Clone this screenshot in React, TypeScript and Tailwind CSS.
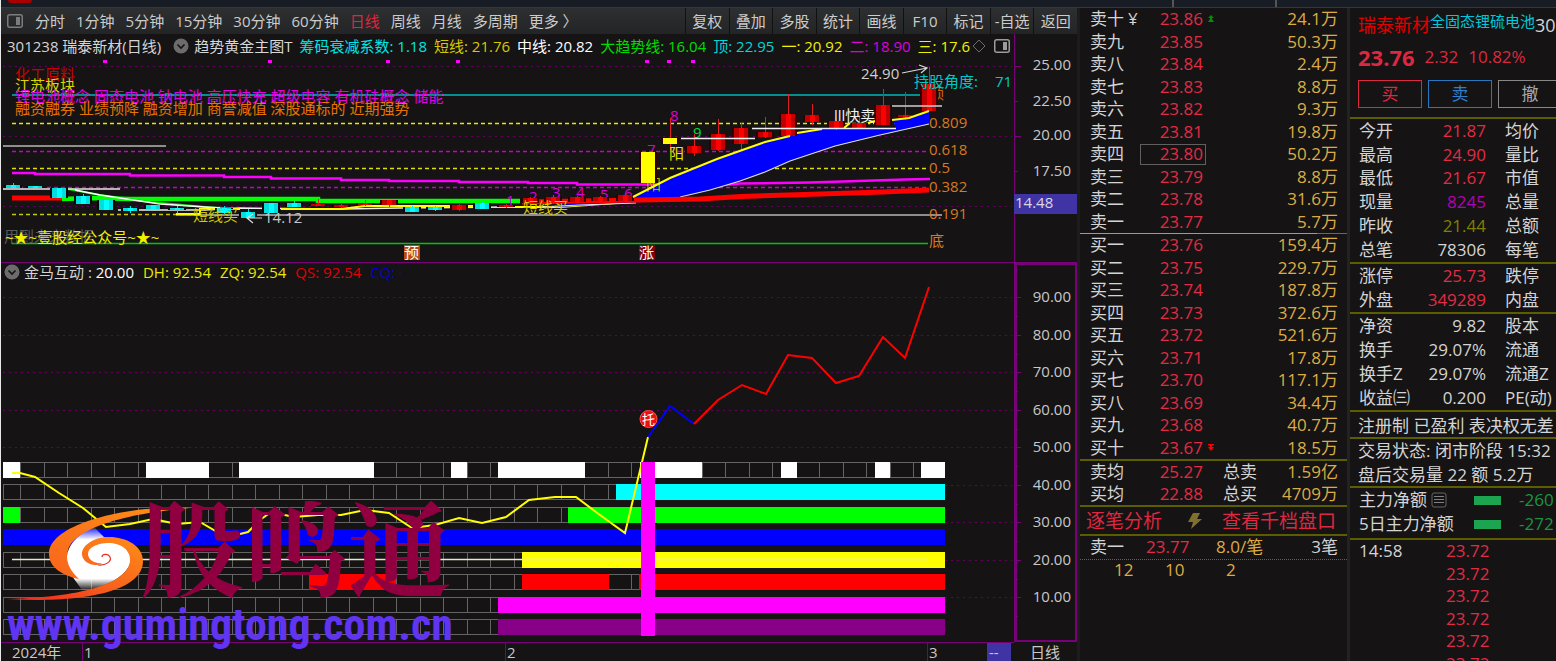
import React from "react";

const periodTabs = ["分时", "1分钟", "5分钟", "15分钟", "30分钟", "60分钟", "日线", "周线", "月线", "多周期", "更多 〉"];
const tools = ["复权", "叠加", "多股", "统计", "画线", "F10", "标记", "-自选", "返回"];

const indicators: [string, string][] = [
  ["趋势黄金主图T", "text-[#d8d8d8]"],
  ["筹码衰减系数: 1.18", "text-[#00e5e5]"],
  ["短线: 21.76", "text-[#d8c800]"],
  ["中线: 20.82", "text-white"],
  ["大趋势线: 16.04", "text-[#00dc00]"],
  ["顶: 22.95", "text-[#00d8d8]"],
  ["一: 20.92", "text-[#f0f000]"],
  ["二: 18.90", "text-[#dc00dc]"],
  ["三: 17.6", "text-[#f0f000]"],
];

const sells: [string, string, string][] = [
  ["卖十", "23.86", "24.1万"],
  ["卖九", "23.85", "50.3万"],
  ["卖八", "23.84", "2.4万"],
  ["卖七", "23.83", "8.8万"],
  ["卖六", "23.82", "9.3万"],
  ["卖五", "23.81", "19.8万"],
  ["卖四", "23.80", "50.2万"],
  ["卖三", "23.79", "8.8万"],
  ["卖二", "23.78", "31.6万"],
  ["卖一", "23.77", "5.7万"],
];
const buys: [string, string, string][] = [
  ["买一", "23.76", "159.4万"],
  ["买二", "23.75", "229.7万"],
  ["买三", "23.74", "187.8万"],
  ["买四", "23.73", "372.6万"],
  ["买五", "23.72", "521.6万"],
  ["买六", "23.71", "17.8万"],
  ["买七", "23.70", "117.1万"],
  ["买八", "23.69", "34.4万"],
  ["买九", "23.68", "40.7万"],
  ["买十", "23.67", "18.5万"],
];

const RED = "text-[#e02c44]";
const GRAY = "text-[#d4d4d4]";

type Stat = [string, string, string, string];
const statsA: Stat[] = [
  ["今开", "21.87", RED, "均价"],
  ["最高", "24.90", RED, "量比"],
  ["最低", "21.67", RED, "市值"],
  ["现量", "8245", "text-[#b400b4]", "总量"],
  ["昨收", "21.44", "text-[#808000]", "总额"],
  ["总笔", "78306", GRAY, "每笔"],
];
const statsB: Stat[] = [
  ["涨停", "25.73", RED, "跌停"],
  ["外盘", "349289", RED, "内盘"],
];
const statsC: Stat[] = [
  ["净资", "9.82", GRAY, "股本"],
  ["换手", "29.07%", GRAY, "流通"],
  ["换手Z", "29.07%", GRAY, "流通Z"],
  ["收益㈢", "0.200", GRAY, "PE(动)"],
];

/* x centre, body top, body bottom, wick top, wick bottom, colour */
type Candle = [number, number, number, number, number, "r" | "c" | "y"];
const candles: Candle[] = [
  [13, 185, 188, 183, 188, "c"],
  [35, 186, 188, 186, 188, "c"],
  [59, 188, 198, 188, 198, "c"],
  [83, 196, 204, 194, 204, "c"],
  [106, 200, 210, 200, 210, "c"],
  [130, 208, 211, 206, 213, "c"],
  [153, 205, 209, 205, 209, "c"],
  [177, 208, 210, 206, 213, "c"],
  [224, 208, 213, 206, 214, "c"],
  [248, 212, 218, 209, 218, "c"],
  [271, 203, 213, 203, 213, "c"],
  [294, 203, 207, 201, 207, "c"],
  [318, 204, 206, 199, 206, "r"],
  [341, 205, 207, 204, 208, "r"],
  [365, 203, 205, 200, 206, "r"],
  [389, 200, 205, 200, 207, "r"],
  [412, 207, 212, 206, 212, "c"],
  [435, 207, 210, 206, 211, "c"],
  [459, 205, 210, 204, 211, "r"],
  [482, 203, 209, 202, 209, "c"],
  [506, 205, 207, 204, 208, "r"],
  [530, 198, 203, 197, 204, "r"],
  [553, 197, 202, 195, 203, "r"],
  [577, 197, 202, 196, 203, "r"],
  [600, 197, 201, 196, 202, "r"],
  [625, 195, 201, 194, 202, "r"],
  [648, 152, 183, 152, 183, "y"],
  [670, 138, 144, 118, 150, "y"],
  [694, 146, 153, 134, 156, "r"],
  [718, 134, 150, 119, 151, "r"],
  [741, 128, 144, 123, 151, "r"],
  [765, 132, 137, 117, 138, "r"],
  [788, 114, 136, 94, 136, "r"],
  [812, 115, 122, 104, 125, "r"],
  [836, 121, 129, 119, 130, "r"],
  [859, 123, 129, 115, 129, "r"],
  [883, 105, 125, 89, 125, "r"],
  [905, 115, 117, 92, 120, "r"],
  [929, 84, 111, 67, 111, "r"],
];
const bodyColor = { r: "#c00000", c: "#00dede", y: "#ffff00" };
const coreColor = { r: "#ff0000", c: "#00ffff", y: "#ffff00" };

const CandleMark = ({ c }: { c: Candle }) => {
  const [x, t, b, wt, wb, k] = c;
  return (
    <g shapeRendering="crispEdges">
      <rect x={x - 9} y={t} width={18} height={b - t} fill={k === "c" ? "#0a0808" : "#300000"} />
      <rect x={x} y={wt} width={1} height={wb - wt} fill={k === "c" ? "#00dede" : "#e02020"} />
      <rect x={x - 7} y={t} width={14} height={b - t} fill={bodyColor[k]} />
      <rect x={x - 2} y={t} width={5} height={b - t} fill={coreColor[k]} />
    </g>
  );
};

const grid = (y: number) => (
  <line key={y} x1={3} x2={1012} y1={y + 0.5} y2={y + 0.5} stroke="#640064" strokeDasharray="2 4" shapeRendering="crispEdges" />
);
const dashed = (y: number, color: string, x2 = 928) => (
  <line x1={12} x2={x2} y1={y} y2={y} stroke={color} strokeWidth={1.4} strokeDasharray="4 3" />
);
const solid = (y: number, color: string, x1 = 12, x2 = 928) => (
  <line x1={x1} x2={x2} y1={y} y2={y} stroke={color} strokeWidth={1.5} />
);

const PricePane = () => (
  <svg viewBox="1 60 1076 203" className="block h-auto w-full" role="img" aria-label="日线主图">
    {[66, 136, 206].map(grid)}
    {[105, 270, 388, 458, 647, 669, 693].map((x) => (
      <rect key={x} x={x - 2} y={60} width={4} height={3} fill="#ff00ff" />
    ))}
    <g className="text-[15px]">
      <text x="15" y="80" fill="#c80000">化工原料</text>
      <text x="15" y="91" fill="#d8d800">江苏板块</text>
    </g>
    {solid(95, "#00b8b8", 12, 920)}
    {dashed(123.5, "#e8e800")}
    {dashed(151.5, "#cc00cc")}
    {dashed(168.5, "#e0e000")}
    {dashed(187.5, "#cc00cc")}
    {dashed(214.5, "#c8c800", 200)}
    <g className="text-[15px]">
      <text x="15" y="102" fill="#e400e4">锂电池概念 固态电池 钠电池 高压快充 超级电容 有机硅概念 储能</text>
      <text x="15" y="114" fill="#e87400">融资融券 业绩预降 融资增加 商誉减值 深股通标的 近期强势</text>
    </g>
    {solid(146, "#b8b8b8", 3, 166)}
    <polyline points="12,198 62,198" stroke="#ff0000" strokeWidth="5" fill="none" />
    <polyline points="62,199 92,198 130,199 318,199 318,201 520,201" stroke="#00ff00" strokeWidth="4.500" fill="none" />
    <polyline points="68,189 100,195 150,202 205,207 240,209" stroke="#00dc00" strokeWidth="2" fill="none" />
    <polyline points="12,173 35,173 35,174 130,174 130,175.500 224,175.500 224,177 271,177 271,178.500 341,178.500 341,180 389,180 389,181 459,181 459,182 528,182 528,183 577,183 577,184.500 730,184.500 740,183.500 810,182.500 858,181 905,179.500 930,179" stroke="#ff00ff" strokeWidth="2.500" fill="none" />
    {solid(189, "#e8e8e8", 3, 120)}
    {solid(215, "#b8b8b8", 176, 942)}
    <polyline points="118,210 205,210 240,208 345,209 400,208 520,207" stroke="#f0f0f0" strokeWidth="1.500" fill="none" />
    <polyline points="75,190 100,195 160,204 220,208" stroke="#ffffff" strokeWidth="1.500" fill="none" />
    <path d="M176 214H200V209H240M281 209H341L365 206H480M500 207H560L630 202" stroke="#ffff00" strokeWidth="2" fill="none" />
    <path d="M545 206 640 199V202L560 207Z" fill="#0000ff" />
    <path d="M540 207 580 205 636 203" stroke="#e8e8e8" fill="none" />
    <path d="M631 198 670 178 717 159 765 142 800 133 822 129 896 129 893 120 909 118 929 111V124L880 135 835 146 790 161 765 172 740 181 710 190 680 197Z" fill="#0000ff" />
    <path d="M680 197 710 190 740 181 765 172 790 161 835 146 880 135 929 124" stroke="#e0e0e0" strokeWidth="1.200" fill="none" />
    <path d="M522 202 640 200 700 199 741 196.500 788 195 836 193.500 883 192 929 190" stroke="#ff0000" strokeWidth="5" fill="none" />
    <text x="646" y="190" className="text-[15px]" fill="#b8b800">阳</text>
    <g className="text-[15px]" fill="#dc00dc">
      <text x="506" y="206">1</text>
      <text x="529" y="202">2</text>
      <text x="552" y="198">3</text>
      <text x="576" y="198">4</text>
      <text x="600" y="200">5</text>
      <text x="624" y="199">6</text>
      <text x="647" y="155">7</text>
      <text x="670" y="121">8</text>
      <text x="693" y="138" fill="#00dc40">9</text>
    </g>
    <text x="929" y="99" className="text-[15px]" fill="#c86410">顶</text>
    {candles.map((c) => (
      <CandleMark key={c[0]} c={c} />
    ))}
    <path d="M633 197 670 178 717 159 765 142 790 136M797 133 822 129M844 128 850 123M868 123 875 121M892 120 909 118 929 111" stroke="#ffff00" strokeWidth="2" fill="none" />
    {solid(138.5, "#f0f0f0", 681, 755)}
    {solid(128.5, "#f0f0f0", 752, 896)}
    {solid(106, "#d0d0d0", 892, 942)}
    {solid(243.5, "#00c800")}
    <g className="text-[15px]">
      <text x="669" y="159" fill="#e8e800">阳</text>
      <text x="834" y="121" fill="#f0f0f0">lll快卖</text>
      <text x="193" y="221" fill="#d0c800">短线买</text>
      <text x="523" y="213" fill="#d8c800">短线买</text>
      <text x="4" y="242" fill="#5a5a5a">用到未来数据</text>
      <text x="5" y="243" fill="#f0f000">~★~壹股经公众号~★~</text>
      <text x="264" y="223" fill="#c8c8c8">14.12</text>
      <text x="861" y="79" fill="#d0d0d0">24.90</text>
      <text x="914" y="87" fill="#00c8c8">持股角度:</text>
      <text x="995" y="87" fill="#00c8c8">71</text>
    </g>
    <path d="M262 218H247M253 214 247 218 253 223M902 73 927 68M919 65 927 68 921 73" stroke="#d8d8d8" strokeWidth="1.200" fill="none" />
    <g className="text-[15px]" fill="#d87820">
      <text x="929" y="128">0.809</text>
      <text x="929" y="155">0.618</text>
      <text x="929" y="173">0.5</text>
      <text x="929" y="192">0.382</text>
      <text x="929" y="219">0.191</text>
      <text x="929" y="246">底</text>
    </g>
    <rect x="404" y="245" width="16" height="15" fill="#b84810" />
    <text x="404" y="258" className="text-[15px]" fill="#ffffff">预</text>
    <rect x="639" y="245" width="16" height="15" fill="#800008" />
    <text x="639" y="258" className="text-[15px]" fill="#ffffff">涨</text>
    <g stroke="#780078" shapeRendering="crispEdges">
      <path d="M1014.500 60V262M1015 66.500H1021M1015 101.500H1018M1015 136.500H1021M1015 171.500H1018" />
      <path d="M1 262.500H1077" />
    </g>
    <g className="text-[15px]" fill="#c8c8c8" textAnchor="end">
      <text x="1071" y="70">25.00</text>
      <text x="1071" y="106">22.50</text>
      <text x="1071" y="140">20.00</text>
      <text x="1071" y="176">17.50</text>
    </g>
    <rect x="1014" y="194" width="63" height="20" fill="#4034a4" />
    <text x="1015" y="208" className="text-[15px]" fill="#d8d8e8">14.48</text>
  </svg>
);

type Band = { y: number; color: string; fills: [number, number][] };
const bands: Band[] = [
  { y: 462, color: "#ffffff", fills: [[3, 20], [146, 209], [239, 374], [451, 467], [498, 585], [640, 702], [781, 797], [875, 890], [921, 945]] },
  { y: 484, color: "#00ffff", fills: [[616, 945]] },
  { y: 507, color: "#00ff00", fills: [[3, 20], [568, 945]] },
  { y: 529, color: "#0000ff", fills: [[3, 945]] },
  { y: 552, color: "#ffff00", fills: [[522, 945]] },
  { y: 574, color: "#ff0000", fills: [[309, 396], [522, 609], [639, 945]] },
  { y: 597, color: "#ff00ff", fills: [[498, 945]] },
  { y: 619, color: "#880088", fills: [[498, 945]] },
];
const cellEdges = Array.from({ length: 39 }, (_, i) => Math.round(20 + i * 23.5));

const OscPane = () => (
  <svg viewBox="1 283 1076 360" className="block h-auto w-full" role="img" aria-label="金马互动">
    {[90, 80, 70, 60, 50, 40, 30, 20, 10].map((v, i) => {
      const y = Math.round(297 + i * 37.5);
      return (
        <g key={v}>
          {grid(y)}
          <text x="1071" y={y + 5} textAnchor="end" className="text-[15px]" fill="#c8c8c8">
            {v}.00
          </text>
          <path d={`M1015 ${y}.5H1021M1015 ${y + 19}.5H1018`} stroke="#780078" shapeRendering="crispEdges" />
        </g>
      );
    })}
    {bands.map((b) => (
      <g key={b.y} shapeRendering="crispEdges">
        <rect x="3.500" y={b.y + 0.5} width="941" height="15" fill="#151314" stroke="#646464" />
        {cellEdges.map((x) => (
          <line key={x} x1={x + 0.5} x2={x + 0.5} y1={b.y} y2={b.y + 16} stroke="#646464" />
        ))}
        {b.fills.map(([a, z]) => (
          <rect key={a} x={a} y={b.y} width={z - a} height="16" fill={b.color} />
        ))}
      </g>
    ))}
    {solid(559.5, "#e8e8c8")}
    <g fill="none" strokeWidth="2">
      <polyline stroke="#ffff00" points="12,473 20,473 35,477 59,493 83,508 106,527 130,524 153,519 177,524 200,522 224,536 236,535 248,532 260,520 271,512 294,517 318,515 341,515 365,510 389,513 412,528 435,525 459,518 482,523 506,517 529,500 555,497 576,497 600,515 625,533 648,437" />
      <polyline stroke="#0000ff" points="648,437 670,406 694,424" />
      <polyline stroke="#ff0000" points="694,424 718,400 742,385 766,394 788,355 812,358 836,383 859,376 883,337 905,358 929,287" />
    </g>
    <rect x="641" y="462" width="14" height="174" fill="#ff00ff" />
    <circle cx="648.500" cy="419" r="8.500" fill="#e81010" stroke="#ff5040" />
    <text x="648.500" y="424" textAnchor="middle" className="text-[13px]" fill="#ffffff">托</text>
    <g stroke="#780078" fill="none" shapeRendering="crispEdges">
      <path d="M1014.500 283V642M1 642.500H1014" />
      <path d="M1016 283V641M1015 641H1077M1076 283V641" strokeWidth="2" />
    </g>
  </svg>
);

const Watermark = () => (
  <svg viewBox="0 500 460 160" className="pointer-events-none absolute bottom-0 left-[-1px] h-[160px] w-[460px]" aria-hidden="true">
    <defs>
      <linearGradient id="swirlTop" x1="0" y1="1" x2="1" y2="0">
        <stop offset="0" stopColor="#f8641c" />
        <stop offset="1" stopColor="#ff9018" />
      </linearGradient>
      <linearGradient id="swirlLow" x1="0" y1="1" x2="1" y2="0">
        <stop offset="0" stopColor="#f02020" />
        <stop offset="0.500" stopColor="#f8641c" />
        <stop offset="1" stopColor="#ff8c18" />
      </linearGradient>
      <linearGradient id="pearl" x1="0" y1="0" x2="0" y2="1">
        <stop offset="0" stopColor="#ffffff" stopOpacity="0.100" />
        <stop offset="0.200" stopColor="#ffffff" />
        <stop offset="0.820" stopColor="#ffffff" />
        <stop offset="1" stopColor="#ffffff" stopOpacity="0.050" />
      </linearGradient>
    </defs>
    <path d="M94 526C76 534 66 546 67 560C68 572 76 580 82 589C104 588 132 574 131 556L122 540L104 536Z" fill="url(#pearl)" />
    <path d="M190 507C140 503 49 520 49 553C49 567 64 575 79 578C69 569 65 559 68 549C76 525 132 512 190 507Z" fill="url(#swirlTop)" />
    <path d="M7 598C70 602 143 594 143 560C143 544 124 535 107 536C91 537 81 546 82 554C83 562 95 567 102 562C94 563 88 558 88 553C88 546 98 542 108 542C121 542 131 549 130 560C128 580 90 596 7 598Z" fill="url(#swirlLow)" />
    <path d="M98 564C106 565 112 560 110 556C108 552 102 553 102 556" fill="none" stroke="#e83020" strokeWidth="1.200" />
    <text x="140" y="588" className="font-['Noto_Serif_CJK_SC','Noto_Sans_CJK_SC',serif] text-[104px] font-bold" fill="#900040">股鸣通</text>
    <text x="7" y="639" className="font-['Liberation_Sans_Narrow','Roboto_Condensed','Liberation_Sans',sans-serif] text-[44px] font-bold" fill="#6034f0">
      www.gumingtong.com.cn
    </text>
  </svg>
);

const PanelIcon = ({ color }: { color: string }) => (
  <svg viewBox="0 0 16 14" className="h-[14px] w-4 shrink-0" aria-hidden="true">
    <rect x="0.750" y="0.750" width="14.500" height="12.500" rx="2" fill="none" stroke={color} strokeWidth="1.500" />
    <rect x="9" y="3" width="4" height="8" fill={color} />
  </svg>
);

const Chevron = () => (
  <svg viewBox="0 0 16 16" className="h-4 w-4 shrink-0" aria-hidden="true">
    <circle cx="8" cy="8" r="7.500" fill="#6c6c6c" />
    <path d="M4.500 6.500 8 10 11.500 6.500" fill="none" stroke="#151314" strokeWidth="1.600" />
  </svg>
);

const Book = ({ rows, label }: { rows: [string, string, string][]; label: string }) => (
  <table className="h-[225px] w-full table-fixed border-collapse text-[17px] leading-5" aria-label={label}>
    <tbody>
      {rows.map(([name, price, vol]) => (
        <tr key={name}>
          <th scope="row" className={`w-[60px] pl-[10px] text-left font-normal whitespace-nowrap ${GRAY}`}>
            {name}
            {name === "卖十" && <span className="pl-1">¥</span>}
          </th>
          <td className="w-[66px]">
            <span className={`flex h-[21px] items-center justify-end border pr-[2px] ${RED} ${name === "卖四" ? "border-[#606060]" : "border-transparent"}`}>
              {price}
            </span>
          </td>
          <td className="w-5 pl-px">
            {name === "卖十" && (
              <svg viewBox="0 0 8 8" className="block h-2 w-2" aria-hidden="true">
                <path d="M4 0 7 3H5V4L7 7H1L3 4V3H1Z" fill="#009000" />
              </svg>
            )}
            {name === "买十" && (
              <svg viewBox="0 0 8 8" className="block h-2 w-2" aria-hidden="true">
                <path d="M1 0H7V1.500H5V3H7L4 7 1 3H3V1.500H1Z" fill="#ff0000" />
              </svg>
            )}
          </td>
          <td className="pr-[9px] text-right text-[#dcac44]">{vol}</td>
        </tr>
      ))}
    </tbody>
  </table>
);

const Stats = ({ rows, height }: { rows: Stat[]; height: string }) => (
  <table className={`w-full table-fixed border-collapse border-b-2 border-[#5c5c00] text-[17px] leading-5 ${height}`}>
    <tbody>
      {rows.map(([a, v, color, b]) => (
        <tr key={a}>
          <th scope="row" className={`w-[66px] pl-[9px] text-left font-normal whitespace-nowrap ${GRAY}`}>{a}</th>
          <td className={`w-[70px] text-right ${color}`}>{v}</td>
          <th scope="row" className={`pl-[19px] text-left font-normal whitespace-nowrap ${GRAY}`}>{b}</th>
        </tr>
      ))}
    </tbody>
  </table>
);

export default function App() {
  return (
    <div className="flex h-screen min-h-[661px] flex-col overflow-hidden border-l border-[#e8e8e8] bg-[#151314] font-['Open_Sans','Noto_Sans_CJK_SC',sans-serif] text-[#d4d4d4]">
      <div className="flex h-2 shrink-0 border-b border-[#34383e] bg-[#171c25]">
        <div className="ml-[7px] h-[3px] w-6 rounded-b-sm bg-[#a80000]" />
        <div className="flex-1" />
        <div className="w-[105px] border-x-2 border-[#555555]" />
        <div className="w-[279px]" />
      </div>

      <div className="flex min-h-0 flex-1">
        <main className="relative min-w-0 flex-1">
          <nav className="flex h-[26px] items-stretch bg-linear-to-b from-[#2e2f30] to-[#232425] text-[15px] leading-5">
            <div className="flex min-w-0 flex-1 items-center gap-[11px] pl-[6px]">
              <span className="mr-px flex"><PanelIcon color="#7c7c7c" /></span>
              {periodTabs.map((t) => (
                <button key={t} type="button" className={`whitespace-nowrap ${t === "日线" ? "text-[#dc2840]" : "text-[#cccccc]"}`}>
                  {t}
                </button>
              ))}
            </div>
            <div className="grid w-[392px] grid-cols-9">
              {tools.map((t) => (
                <button key={t} type="button" className="border-l border-[#111111] whitespace-nowrap text-[#cccccc]">
                  {t}
                </button>
              ))}
            </div>
          </nav>

          <div className="flex h-[26px] text-[15px] leading-5">
            <div className="flex min-w-0 flex-1 items-center border-r border-[#780078] pb-[2px] pl-[6px]">
              <span className="mr-3 whitespace-nowrap">301238 瑞泰新材(日线)</span>
              <Chevron />
              <div className="ml-[5px] flex min-w-0 flex-1 gap-[7px] overflow-hidden">
                {indicators.map(([t, c]) => (
                  <span key={t} className={`whitespace-nowrap ${c}`}>{t}</span>
                ))}
              </div>
              <svg viewBox="0 0 14 14" className="mr-2 h-[14px] w-[14px] shrink-0" aria-hidden="true">
                <path d="M7 1 13 7 7 13 1 7Z" fill="none" stroke="#6c6c6c" />
              </svg>
              <span className="mr-1 flex"><PanelIcon color="#9c9c9c" /></span>
            </div>
            <div className="w-[62px]" />
          </div>

          <PricePane />

          <div className="flex h-5 text-[15px] leading-[18px]">
            <div className="flex flex-1 items-center gap-[9px] border-r border-[#780078] pb-[2px] pl-[3px] whitespace-nowrap">
              <Chevron />
              <span className="-ml-[5px]">金马互动 : <span className="text-white">20.00</span></span>
              <span className="text-[#e8e800]">DH: 92.54</span>
              <span className="text-[#e8e800]">ZQ: 92.54</span>
              <span className="text-[#e00000]">QS: 92.54</span>
              <span className="text-[#0000dc]">CQ: -</span>
            </div>
            <div className="w-[62px] border-2 border-b-0 border-[#780078]" />
          </div>

          <OscPane />

          <div className="flex h-[18px] text-[15px] leading-[18px] text-[#c8c8c8]">
            <span className="w-[81px] pl-[11px]">2024年</span>
            <span className="w-[423px] border-l border-[#780078] pl-px">1</span>
            <span className="w-[422px] border-l border-[#780078] pl-px">2</span>
            <span className="flex-1 border-l border-[#780078] pl-px">3</span>
            <span className="w-6 bg-[#4034a4] pl-[2px]">--</span>
            <span className="w-[66px] pl-[19px]">日线</span>
          </div>
          <Watermark />
        </main>

        <aside className="w-[270px] shrink-0 border-l-3 border-[#1c1c1c]" aria-label="买卖盘">
          <Book rows={sells} label="卖盘" />
          <div className="flex h-px">
            <div className="flex-1 bg-[#c89438]" />
            <div className="w-[30px] bg-[#2878b8]" />
          </div>
          <Book rows={buys} label="买盘" />
          <div className="h-[2px] bg-[#5c5c00]" />
          <table className="h-[44px] w-full table-fixed border-collapse text-[17px] leading-5">
            <tbody>
              {[
                ["卖均", "25.27", "总卖", "1.59亿"],
                ["买均", "22.88", "总买", "4709万"],
              ].map(([a, b, c, d]) => (
                <tr key={a}>
                  <th scope="row" className={`w-[50px] pl-[10px] text-left font-normal ${GRAY}`}>{a}</th>
                  <td className={`w-[73px] text-right ${RED}`}>{b}</td>
                  <th scope="row" className={`w-[60px] pl-5 text-left font-normal ${GRAY}`}>{c}</th>
                  <td className="pr-[9px] text-right text-[#dcac44]">{d}</td>
                </tr>
              ))}
            </tbody>
          </table>
          <div className="flex h-[31px] items-center justify-between border-t-2 border-b-2 border-[#5c5c00] pr-[11px] pl-[6px] text-[19px] leading-6 text-[#dc2840]">
            <a href="#ticks">逐笔分析</a>
            <svg viewBox="0 0 14 16" className="ml-[6px] h-4 w-[14px]" aria-hidden="true">
              <path d="M5 0H12L9 6H14L3 16 5 9H0Z" fill="#807030" />
            </svg>
            <a href="#depth">查看千档盘口</a>
          </div>
          <div className="flex h-6 items-center border-b border-dotted border-[#6c6c00] pr-[9px] pb-px pl-[10px] text-[17px] leading-5">
            <span className="w-[56px]">卖一</span>
            <span className={`w-[70px] ${RED}`}>23.77</span>
            <span className="flex-1 text-[#dcac44]">8.0/笔</span>
            <span>3笔</span>
          </div>
          <div className="flex h-5 items-center pl-[34px] text-[17px] leading-5 text-[#dcac44]">
            <span className="w-[51px]">12</span>
            <span className="w-[61px]">10</span>
            <span>2</span>
          </div>
        </aside>

        <aside className="w-[209px] shrink-0 overflow-hidden border-l-3 border-[#222222] whitespace-nowrap" aria-label="行情">
          <div className="flex h-[34px] items-center pl-2 text-[18px] leading-6">
            <span className="text-[#e00000]">瑞泰新材</span>
            <span className="mb-2 text-[15px] leading-5 text-[#00c8dc]">全固态锂硫电池</span>
            <span>30</span>
          </div>
          <div className="flex h-[30px] items-center gap-[10px] pl-2 text-[17px] leading-6 text-[#dc2840]">
            <span className="text-[22px] font-bold">23.76</span>
            <span>2.32</span>
            <span>10.82%</span>
          </div>
          <div className="flex h-[47px] gap-[6px] border-b-2 border-[#5c5c00] pt-2 pl-2 text-[17px] leading-6">
            <button type="button" className="h-7 w-16 shrink-0 border border-[#dc2840] text-[#dc2840]">买</button>
            <button type="button" className="h-7 w-16 shrink-0 border border-[#2878c0] text-[#3080c8]">卖</button>
            <button type="button" className="h-7 w-16 shrink-0 border border-[#888888] text-[#a8a8a8]">撤</button>
          </div>
          <Stats rows={statsA} height="h-[145px]" />
          <Stats rows={statsB} height="h-[50px]" />
          <Stats rows={statsC} height="h-[98px]" />
          <div className="h-[27px] border-b-2 border-[#5c5c00] pl-2 text-[17px] leading-7">注册制 已盈利 表决权无差</div>
          <div className="h-[49px] border-b-2 border-[#5c5c00] pl-2 text-[17px] leading-6">
            <p>交易状态: 闭市阶段 15:32</p>
            <p>盘后交易量 22 额 5.2万</p>
          </div>
          <div className="h-[52px] border-b-2 border-[#5c5c00] pl-[9px] text-[17px] leading-6">
            <div className="flex items-center">
              <span className="flex w-[115px] shrink-0 items-center gap-1">
                主力净额
                <svg viewBox="0 0 16 16" className="h-4 w-4" aria-hidden="true">
                  <rect x="1" y="1" width="14" height="14" rx="2" fill="none" stroke="#666666" />
                  <path d="M3 4.500H13M3 7.500H13M3 10.500H13" stroke="#808080" />
                </svg>
              </span>
              <span className="mr-[18px] h-[9px] w-[27px] shrink-0 bg-[#1ca450]" />
              <span className="text-[#1c9440]">-260</span>
            </div>
            <div className="flex items-center">
              <span className="w-[115px] shrink-0">5日主力净额</span>
              <span className="mr-[18px] h-[9px] w-[27px] shrink-0 bg-[#1ca450]" />
              <span className="text-[#1c9440]">-272</span>
            </div>
          </div>
          <table className="h-[135px] w-full table-fixed border-collapse text-[17px] leading-5">
            <tbody>
              {[0, 1, 2, 3, 4, 5].map((i) => (
                <tr key={i}>
                  <td className="w-24 pl-[9px]">{i === 0 ? "14:58" : ""}</td>
                  <td className={RED}>23.72</td>
                </tr>
              ))}
            </tbody>
          </table>
        </aside>
      </div>
    </div>
  );
}
